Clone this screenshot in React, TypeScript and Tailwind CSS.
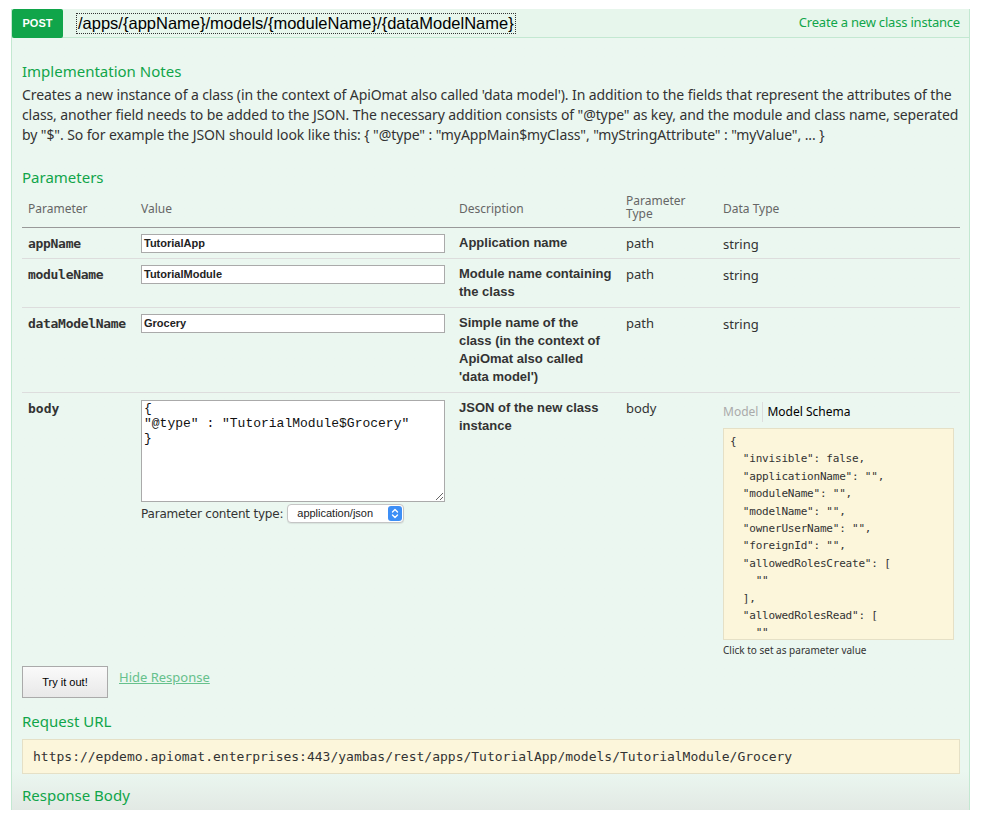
import React from 'react'

const params = [
  { name: 'appName', value: 'TutorialApp', desc: ['Application name'] },
  { name: 'moduleName', value: 'TutorialModule', desc: ['Module name containing', 'the class'] },
  {
    name: 'dataModelName',
    value: 'Grocery',
    desc: ['Simple name of the', 'class (in the context of', 'ApiOmat also called', "'data model')"],
  },
]

const schema = [
  '{',
  '  "invisible": false,',
  '  "applicationName": "",',
  '  "moduleName": "",',
  '  "modelName": "",',
  '  "ownerUserName": "",',
  '  "foreignId": "",',
  '  "allowedRolesCreate": [',
  '    ""',
  '  ],',
  '  "allowedRolesRead": [',
  '    ""',
]

function SelectBox() {
  return (
    <div className="ml-[4px] flex h-[19px] w-[117px] items-center justify-between rounded-[4px] border border-[#c5c5c5] bg-white pl-[9px] pr-[1px] shadow-[0_1px_1px_rgba(0,0,0,0.08)]">
      <span className="font-['Liberation_Sans',sans-serif] text-[11px] text-[#222]">application/json</span>
      <span className="flex h-[15px] w-[14px] items-center justify-center rounded-[3px] bg-[#3d8ff6]">
        <svg width="8" height="11" viewBox="0 0 8 11" fill="none" stroke="white" strokeWidth="1.4" strokeLinecap="round" strokeLinejoin="round">
          <path d="M1.5 4 L4 1.5 L6.5 4" />
          <path d="M1.5 7 L4 9.5 L6.5 7" />
        </svg>
      </span>
    </div>
  )
}

export default function App() {
  return (
    <div className="min-h-[813px] bg-white pl-[11px] pr-[14px] pt-[9px]">
      <div className="border-x border-[#c3e8d1]">
        {/* heading */}
        <div className="flex h-[29px] items-center border-b border-[#c3e8d1] bg-[#e7f6ec] pr-[9px]">
          <span className="flex h-[29px] w-[51px] items-center justify-center rounded-[2px] bg-[#10a54a] font-['Liberation_Sans',sans-serif] text-[11px] font-bold text-white">
            POST
          </span>
          <span className="ml-[13px] border border-dotted border-[#333] px-[1px] font-['Liberation_Sans',sans-serif] text-[16.5px] leading-[19px] text-black">
            /apps/{'{appName}'}/models/{'{moduleName}'}/{'{dataModelName}'}
          </span>
          <span className="ml-auto font-['Noto_Sans',sans-serif] text-[13px] tracking-[-0.2px] text-[#10a54a]">Create a new class instance</span>
        </div>

        {/* content */}
        <div className="bg-[#ebf7f0] bg-gradient-to-b from-[#ebf7f0] from-95% to-[#e2e9e4] pl-[10px] pr-[9px] pt-[22px] pb-[4px] font-['Noto_Sans',sans-serif] text-[#333]">
          <h4 className="text-[15px] leading-[22px] text-[#10a54a]">Implementation Notes</h4>
          <p className="mt-[3px] text-[14px] leading-[20px] tracking-[-0.1px]">
            Creates a new instance of a class (in the context of ApiOmat also called 'data model'). In addition to the fields that
            represent the attributes of the class, another field needs to be added to the JSON. The necessary addition consists of
            "@type" as key, and the module and class name, seperated by "$". So for example the JSON should look like this: {'{'}{' '}
            "@type" : "myAppMain$myClass", "myStringAttribute" : "myValue", ... {'}'}
          </p>

          <h4 className="mt-[21px] text-[15px] leading-[22px] text-[#10a54a]">Parameters</h4>

          <table className="mt-[5px] w-full border-collapse">
            <thead>
              <tr className="border-b border-[#999] text-left align-top text-[12px] font-normal text-[#666]">
                <th className="w-[113px] px-[6px] pt-[7px] pb-[8px] font-normal">Parameter</th>
                <th className="w-[318px] px-[6px] pt-[7px] pb-[8px] font-normal">Value</th>
                <th className="w-[167px] px-[6px] pt-[7px] pb-[8px] font-normal">Description</th>
                <th className="w-[97px] px-[6px] pt-[1px] pb-[7px] text-[12px] leading-[13px] font-normal">
                  Parameter
                  <br />
                  Type
                </th>
                <th className="px-[6px] pt-[7px] pb-[8px] font-normal">Data Type</th>
              </tr>
            </thead>
            <tbody>
              {params.map(p => (
                <tr key={p.name} className="border-b border-[#ddd] align-top">
                  <td className="px-[6px] pt-[7px] pb-[5px] font-['DejaVu_Sans_Mono',monospace] text-[13px] font-bold leading-[18px] tracking-[-0.3px] text-[#333]">
                    {p.name}
                  </td>
                  <td className="px-[6px] pt-[6px]">
                    <div className="flex h-[19px] w-[304px] items-center border border-[#aaa] bg-white px-[2px] font-['Liberation_Sans',sans-serif] text-[11px] font-bold text-[#222]">
                      {p.value}
                    </div>
                  </td>
                  <td className="px-[6px] pt-[6px] pb-[6px] font-['Liberation_Sans',sans-serif] text-[13px] font-bold leading-[18px] text-[#333]">
                    {p.desc.map(d => (
                      <div key={d}>{d}</div>
                    ))}
                  </td>
                  <td className="px-[6px] pt-[6px] text-[13px] leading-[18px]">path</td>
                  <td className="px-[6px] pt-[7px] text-[13px] leading-[18px]">string</td>
                </tr>
              ))}
              <tr className="align-top">
                <td className="px-[6px] pt-[7px] font-['DejaVu_Sans_Mono',monospace] text-[13px] font-bold leading-[18px] text-[#333]">body</td>
                <td className="px-[6px] pt-[7px]">
                  <textarea
                    readOnly
                    defaultValue={'{\n"@type" : "TutorialModule$Grocery"\n}'}
                    className="block h-[102px] w-[304px] resize border border-[#aaa] bg-white px-[2px] py-0 font-['Liberation_Mono',monospace] text-[13px] leading-[15px] text-[#111] outline-none"
                  />
                  <div className="mt-[2px] flex items-center">
                    <span className="font-['DejaVu_Sans',sans-serif] text-[12px] tracking-[-0.2px] text-[#333]">Parameter content type:</span>
                    <SelectBox />
                  </div>
                </td>
                <td className="px-[6px] pt-[6px] font-['Liberation_Sans',sans-serif] text-[13px] font-bold leading-[18px] text-[#333]">
                  JSON of the new class
                  <br />
                  instance
                </td>
                <td className="px-[6px] pt-[6px] text-[13px] leading-[18px]">body</td>
                <td className="pt-[9px] pl-[6px]">
                  <div className="flex items-center text-[12px] leading-[20px]">
                    <span className="pr-[4px] text-[#aaa]">Model</span>
                    <span className="border-l border-[#ddd] pl-[4px] text-[#000]">Model Schema</span>
                  </div>
                  <div className="mt-[6px] h-[212px] w-[231px] overflow-hidden border border-[#e5e0c6] bg-[#fcf6db] px-[6px] pt-[4px]">
                    <pre className="font-['DejaVu_Sans_Mono',monospace] text-[11px] leading-[17.4px] tracking-[-0.2px] text-[#333]">
                      {schema.join('\n')}
                    </pre>
                  </div>
                  <div className="mt-[3px] text-[10px] leading-[14px] text-[#333]">Click to set as parameter value</div>
                </td>
              </tr>
            </tbody>
          </table>

          <div className="mt-[9px] flex items-start">
            <button className="h-[32px] w-[86px] border border-[#aaa] bg-gradient-to-b from-[#fafafa] to-[#e8e8e8] font-['Liberation_Sans',sans-serif] text-[11px] text-black">
              Try it out!
            </button>
            <a className="ml-[11px] mt-[2px] text-[13px] leading-[18px] text-[#66c18c] underline">Hide Response</a>
          </div>

          <h4 className="mt-[12px] text-[15px] leading-[22px] text-[#10a54a]">Request URL</h4>
          <div className="mt-[7px] flex h-[35px] items-center border border-[#e5e0c6] bg-[#fcf6db] px-[10px] font-['DejaVu_Sans_Mono',monospace] text-[13px] text-[#333]">
            https://epdemo.apiomat.enterprises:443/yambas/rest/apps/TutorialApp/models/TutorialModule/Grocery
          </div>
          <h4 className="mt-[10px] text-[15px] leading-[22px] text-[#10a54a]">Response Body</h4>
        </div>
      </div>
    </div>
  )
}
